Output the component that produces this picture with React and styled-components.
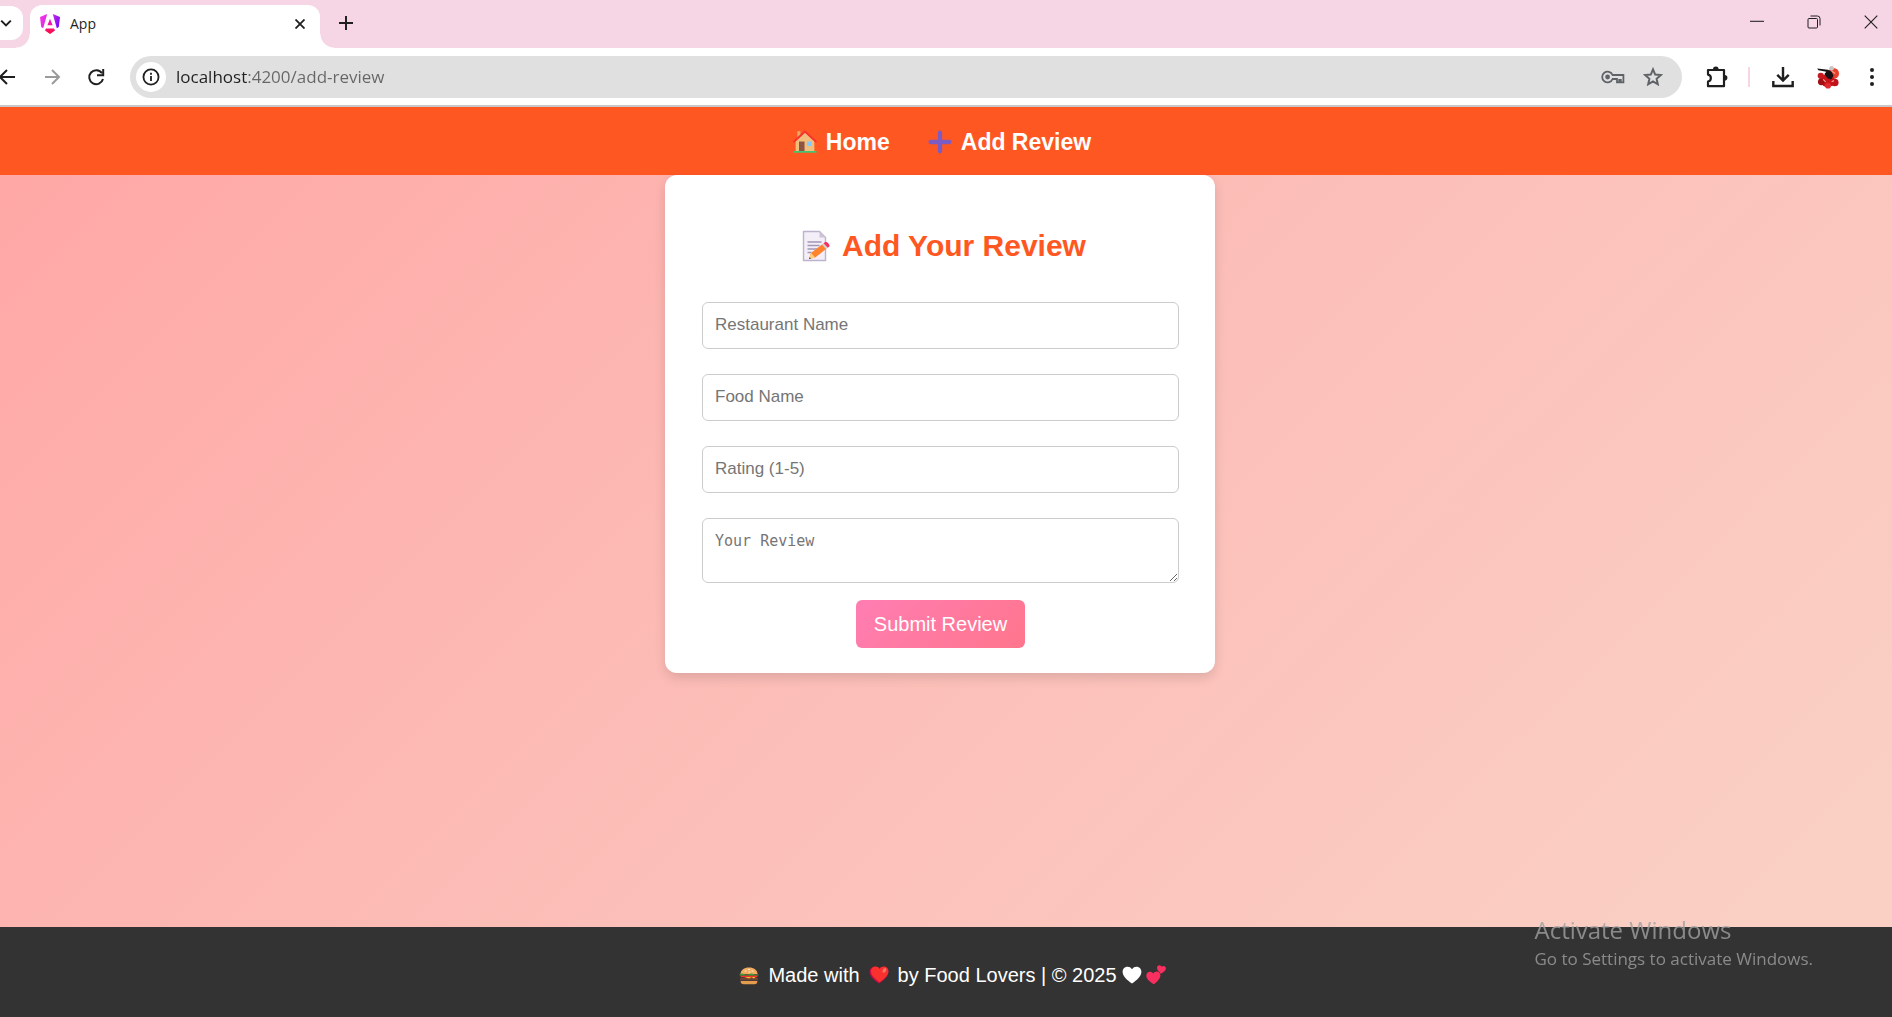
import React from "react";
import styled, { createGlobalStyle } from "styled-components";

const GlobalStyle = createGlobalStyle`
  * { box-sizing: border-box; }
  body { margin: 0; font-family: "Liberation Sans", Arial, sans-serif; }
  button, input, textarea { font: inherit; margin: 0; }
`;

const uiFont = `"Open Sans", "Noto Sans", sans-serif`;

const Window = styled.div`
  display: flex;
  flex-direction: column;
  min-height: 100vh;
`;

const IconButton = styled.button`
  display: flex;
  align-items: center;
  justify-content: center;
  flex: none;
  width: ${(p) => p.$w || 24}px;
  height: 32px;
  padding: 0;
  border: 0;
  background: none;
  color: ${(p) => p.$color || "#1f1f1f"};
`;

const TitleBar = styled.header`
  display: flex;
  align-items: flex-start;
  height: 48px;
  padding-right: 9px;
  background: #f6d5e4;
`;

const TabSearch = styled(IconButton)`
  width: 23px;
  height: 34px;
  margin-top: 6px;
  padding-right: 11px;
  border-radius: 0 12px 12px 0;
  background: #fff;
`;

const Tab = styled.div`
  position: relative;
  display: flex;
  align-items: center;
  gap: 10px;
  width: 290px;
  height: 43px;
  margin: 5px 12px 0 7px;
  padding: 0 8px 6px 10px;
  border-radius: 12px 12px 0 0;
  background: #fff;
  font: 14px/20px ${uiFont};
  color: #1f1f1f;

  &::before,
  &::after {
    content: "";
    position: absolute;
    bottom: 0;
    width: 14px;
    height: 14px;
  }
  &::before {
    right: 100%;
    background: radial-gradient(circle at 0 0, transparent 13px, #fff 14px);
  }
  &::after {
    left: 100%;
    background: radial-gradient(circle at 100% 0, transparent 13px, #fff 14px);
  }
`;

const TabTitle = styled.span`
  flex: 1;
`;

const NewTab = styled(IconButton)`
  margin-top: 7px;
`;

const WindowControls = styled.div`
  display: flex;
  gap: 33px;
  margin-top: 6px;
  margin-left: auto;
`;

const Toolbar = styled.div`
  display: flex;
  align-items: center;
  height: 59px;
  border-bottom: 2px solid #c8c8c8;
  padding-right: 8px;
  background: #fff;
`;

const NavButtons = styled.div`
  display: flex;
  gap: 20px;
  margin-right: 22px;
`;

const AddressBar = styled.div`
  display: flex;
  flex: 1;
  align-items: center;
  height: 42px;
  padding: 0 17px 0 6px;
  border-radius: 21px;
  background: #e0e0e0;
`;

const SiteInfo = styled(IconButton)`
  width: 30px;
  height: 30px;
  border-radius: 50%;
  background: #fff;
`;

const Address = styled.input`
  flex: 1;
  min-width: 0;
  padding: 0;
  margin-left: 10px;
  border: 0;
  outline: 0;
  font: 17px/24px ${uiFont};
  color: #5f6368;
  background: linear-gradient(90deg, #1f1f1f 71px, #666 71px);
  background-clip: text;
  -webkit-background-clip: text;
  -webkit-text-fill-color: transparent;
`;

const AddressActions = styled.div`
  display: flex;
  gap: 16px;
`;

const ToolbarActions = styled.div`
  display: flex;
  align-items: center;
  margin-left: 22px;
`;

const Separator = styled.span`
  width: 2px;
  height: 20px;
  margin: 0 21px 0 20px;
  background: #f6d5e4;
`;

const Profile = styled(IconButton)`
  margin: 0 20px 0 21px;
`;

const SiteNav = styled.nav`
  display: flex;
  justify-content: center;
  gap: 38px;
  padding: 20px 8px 18px 0;
  background: #ff5722;
`;

const NavLink = styled.a`
  display: flex;
  align-items: center;
  gap: 9px;
  font-size: 23px;
  line-height: 30px;
  font-weight: bold;
  color: #fff;
  text-decoration: none;
`;

const Page = styled.main`
  flex: 1;
  padding: 0 12px 24px 0;
  background: linear-gradient(135deg, #ffa8a6, #fcbeb8 50%, #fad0c4 96%);
`;

const Card = styled.section`
  width: 100%;
  max-width: 550px;
  margin: 0 auto;
  padding: 51px 36px 25px 37px;
  border-radius: 12px;
  background: #fff;
  box-shadow: 0 5px 12px rgba(0, 0, 0, 0.12);
`;

const CardTitle = styled.h2`
  display: flex;
  align-items: center;
  justify-content: center;
  gap: 11px;
  margin: 0 0 36px;
  padding-left: 6px;
  font-size: 30px;
  line-height: 40px;
  color: #ff5722;
`;

const Form = styled.form`
  display: flex;
  flex-direction: column;
  align-items: center;
`;

const fieldStyle = `
  display: block;
  width: 100%;
  padding: 12px;
  border: 1px solid #ccc;
  border-radius: 6px;
  background: #fff;
  color: #222;
  outline: 0;
  &::placeholder { color: #757575; opacity: 1; }
`;

const Field = styled.input`
  ${fieldStyle}
  height: 47px;
  margin-bottom: 25px;
  padding-bottom: 14px;
  font-size: 17px;
`;

const ReviewField = styled.textarea`
  ${fieldStyle}
  height: 65px;
  margin-bottom: 17px;
  font: 15px/20px "DejaVu Sans Mono", monospace;
  resize: vertical;
`;

const Submit = styled.button`
  padding: 12px 18px;
  border: 0;
  border-radius: 6px;
  background: linear-gradient(135deg, #ff7eb3, #ff758c);
  font-size: 20px;
  line-height: 24px;
  color: #fff;
`;

const Footer = styled.footer`
  display: flex;
  align-items: center;
  justify-content: center;
  height: 90px;
  padding: 5px 0 0 13px;
  background: #333;
  color: #fff;
  font-size: 20px;
  line-height: 24px;
`;

const FooterText = styled.p`
  display: flex;
  align-items: center;
  gap: 9px;
  margin: 0;
`;

const Hearts = styled.span`
  display: flex;
  gap: 4px;
  margin-left: -4px;
`;

const Watermark = styled.aside`
  position: fixed;
  right: 79px;
  bottom: 45px;
  font-family: ${uiFont};
  color: rgba(160, 160, 160, 0.8);
  pointer-events: none;
`;

const WatermarkTitle = styled.p`
  margin: 0;
  font-size: 24px;
  line-height: 32px;
`;

const WatermarkText = styled.p`
  margin: 0;
  font-size: 17px;
  line-height: 26px;
`;

function Svg({ size = 20, children, ...rest }) {
  return (
    <svg width={size} height={size} viewBox="0 0 20 20" fill="none" aria-hidden="true" {...rest}>
      {children}
    </svg>
  );
}

const line = { stroke: "currentColor", strokeWidth: 2 };

const Chevron = () => (
  <Svg size={12}><path d="M2 6l8 8 8-8" stroke="currentColor" strokeWidth="3.4" /></Svg>
);
const Angular = () => (
  <Svg>
    <defs>
      <linearGradient id="ng-a" x1="0" y1="0" x2="20" y2="8" gradientUnits="userSpaceOnUse">
        <stop stopColor="#f637e3" /><stop offset=".5" stopColor="#d829e8" /><stop offset="1" stopColor="#7a0df5" />
      </linearGradient>
      <linearGradient id="ng-b" x1="0" y1="6" x2="0" y2="20" gradientUnits="userSpaceOnUse">
        <stop stopColor="#e91ecb" /><stop offset="1" stopColor="#ff0a3c" />
      </linearGradient>
    </defs>
    <path d="M0 3L7.2 0 3.2 14.2 1.2 13z M20 3L12.8 0l4 14.2 2-1.2z" fill="url(#ng-a)" />
    <path d="M10 4.8l2.6 6.4H7.4z M6 14.6h8l1 1.8L10 20l-5-3.6z" fill="url(#ng-b)" />
  </Svg>
);
const Cross = () => (
  <Svg size={10}><path d="M1 1l18 18M19 1L1 19" stroke="currentColor" strokeWidth="3.6" /></Svg>
);
const Plus = () => (
  <Svg size={14}><path d="M10 0v20M0 10h20" stroke="currentColor" strokeWidth="2.8" /></Svg>
);
const Minimize = () => (
  <Svg size={14}><path d="M0 9h20" stroke="currentColor" strokeWidth="1.5" /></Svg>
);
const Restore = () => (
  <svg width="14" height="14" viewBox="0 0 14 14" fill="none" stroke="currentColor" aria-hidden="true">
    <rect x="1" y="3.5" width="9.5" height="9.5" rx="1" />
    <path d="M3.5 1h7A2.6 2.6 0 0 1 13 3.5v7" />
  </svg>
);
const CloseWindow = () => (
  <Svg size={14}><path d="M1 1l18 18M19 1L1 19" stroke="currentColor" strokeWidth="1.6" /></Svg>
);
const Back = () => (
  <Svg><path d="M15 10H0M7 3l-7 7 7 7" {...line} /></Svg>
);
const Forward = () => (
  <Svg><path d="M3 10h14M10 3l7 7-7 7" {...line} /></Svg>
);
const Reload = () => (
  <Svg>
    <path d="M16 6.2A7 7 0 1 0 17 12" {...line} />
    <path d="M17.2 2v6.2H11" {...line} />
  </Svg>
);
const Info = () => (
  <Svg size={18}>
    <circle cx="10" cy="10" r="8.4" {...line} />
    <path d="M10 9v5.5M10 5.2v2.2" {...line} />
  </Svg>
);
const Key = () => (
  <svg width="24" height="14" viewBox="0 0 24 14" fill="none" aria-hidden="true">
    <path d="M11.6 5A5.4 5.4 0 1 0 11.6 9H16v3.4h2.2V9.8h1.6v2.6H22.4V5z" stroke="currentColor" strokeWidth="1.8" />
    <circle cx="6.6" cy="7" r="2.4" fill="currentColor" />
  </svg>
);
const Star = () => (
  <Svg size={20}>
    <path d="M10 2.4l2.2 5.2 5.6.5-4.2 3.7 1.2 5.5-4.8-2.9-4.8 2.9 1.2-5.5L2.2 8.1l5.6-.5z" stroke="currentColor" strokeWidth="2" />
  </Svg>
);
const Puzzle = () => (
  <svg width="24" height="24" viewBox="0 0 24 24" fill="none" aria-hidden="true">
    <path d="M4 5h16v16.2H4v-4.6c3.8-.6 3.8-6.4 0-7z" stroke="currentColor" strokeWidth="2.2" strokeLinejoin="round" />
    <path d="M9 4.4a2.8 2.8 0 0 1 5.6 0z M20.6 10a2.8 2.8 0 0 1 0 5.6z" fill="currentColor" />
  </svg>
);
const Download = () => (
  <Svg size={22}>
    <path d="M10 1v12M4.8 8l5.2 5.2L15.2 8M1.2 13.6v4.6h17.6v-4.6" stroke="currentColor" strokeWidth="2.2" />
  </Svg>
);
const Avatar = () => (
  <Svg size={24}>
    <circle cx="4" cy="9" r="2.6" fill="#c71a20" />
    <circle cx="14.6" cy="7" r="4.6" fill="#e8402c" />
    <circle cx="9.6" cy="13" r="5.6" fill="#c8141a" />
    <circle cx="4.4" cy="14" r="2.8" fill="#a30d14" />
    <circle cx="15.6" cy="14.6" r="3.2" fill="#c1121b" />
    <circle cx="10" cy="17.2" r="2.4" fill="#e02a2e" />
    <circle cx="13" cy="2.8" r="2" fill="#c9c4c6" />
    <path d="M1 3l9 1 3 1.6 1.6 3.4-2 3-3-1-2.6-3.4 1.6-2L2 4.4z" fill="#171314" />
    <path d="M13 5l3 2M6 12l2 2M13 14l2-1" stroke="#f6a08c" />
  </Svg>
);
const Dots = () => (
  <Svg>
    <circle cx="10" cy="3" r="2" fill="currentColor" />
    <circle cx="10" cy="10" r="2" fill="currentColor" />
    <circle cx="10" cy="17" r="2" fill="currentColor" />
  </Svg>
);
const House = () => (
  <Svg size={24}>
    <path d="M3.6 1h2.6v6H3.6z" fill="#e9a965" />
    <path d="M2.2 9L10 1.8 17.8 9v9.2H2.2z" fill="#f3bd7b" />
    <path d="M1 9.6L10 1.2l9 8.4" stroke="#f8312f" strokeWidth="1.6" strokeLinecap="round" />
    <path d="M5 9.6h4.6v8.6H5z" fill="#8c5543" />
    <path d="M11.6 9.6h3.8v3.8h-3.8z" fill="#83cbff" />
    <path d="M1 18.3h18" stroke="#44c472" strokeWidth="1.5" strokeLinecap="round" />
  </Svg>
);
const PurplePlus = () => (
  <Svg size={24}><path d="M10 2.2v15.6M2.2 10h15.6" stroke="#7d5bc4" strokeWidth="3.6" strokeLinecap="round" /></Svg>
);
const Memo = () => (
  <svg width="30" height="32" viewBox="0 0 30 32" fill="none" aria-hidden="true">
    <path d="M2.5 1.5h16l6 6v23h-22z" fill="#f3eef8" stroke="#bdb3cd" strokeLinejoin="round" strokeWidth="1.4" />
    <path d="M18.5 1.5l6 6h-6z" fill="#cdc4d6" />
    <path d="M6.5 12h14M6.5 15.5h12M6.5 19h10M6.5 22.5h4" stroke="#a397b5" strokeWidth="1.3" />
    <path d="M8 29l2-6L21.6 14l4 4.6L14.2 27.6z" fill="#ff822d" />
    <path d="M8 29l2-6 4.2 4.6z" fill="#ffce7c" />
    <path d="M8 29l.6-1.8 1.4 1.2z" fill="#402a32" />
    <path d="M21 14.4l1.8-1.4 4 4.6-1.8 1.4z" fill="#d3d3d3" />
    <path d="M22.6 13.2c2-2 3.6-1.2 5 .5s1.4 2.6-.8 4z" fill="#f92f60" />
  </svg>
);
const Burger = () => (
  <Svg>
    <path d="M1.4 9.2C1.8 4.6 5 2.4 10 2.4s8.2 2.2 8.6 6.8z" fill="#f3ad61" />
    <rect x=".8" y="12.6" width="18.4" height="3" rx="1.5" fill="#6d4534" />
    <path d="M2 11h16l-3 2.6-2.6-1.4L10 13.6z" fill="#ffb02e" />
    <path d="M1.6 10.4h16.8v1.6H1.6z" fill="#f8312f" />
    <path d="M.6 9.2q2.3-1.6 4.7 0t4.7 0 4.7 0 4.7 0v1.4H.6z" fill="#3f9a35" />
    <path d="M1.6 16h16.8q0 3.2-3 3.2H4.6q-3 0-3-3.2z" fill="#e39d4d" />
    <path d="M6 6h1M9.5 4.5h1M13 6h1M10 7h1" stroke="#fff0cf" strokeLinecap="round" />
  </Svg>
);
const heartPath = "M10 18.6C5 15 .6 11.2.6 6.8.6 1.4 7.4-.2 10 4.2 12.6-.2 19.4 1.4 19.4 6.8c0 4.4-4.4 8.2-9.4 11.8z";
const RedHeart = () => (
  <Svg>
    <path d={heartPath} fill="#ca0b4a" />
    <path d={heartPath} fill="#f8312f" transform="translate(1.4 0) scale(.93)" />
    <ellipse cx="15.4" cy="5.4" rx="1.6" ry="2.6" fill="#f37366" transform="rotate(30 15.4 5.4)" />
  </Svg>
);
const WhiteHeart = () => (
  <Svg><path d={heartPath} fill="#fff" /></Svg>
);
const TwoHearts = () => (
  <Svg>
    <path d={heartPath} fill="#f92f60" transform="translate(0 5.4) rotate(-4 7 7) scale(.75)" />
    <path d={heartPath} fill="#f92f60" transform="translate(10.4 -.2) rotate(8 5 5) scale(.48)" />
  </Svg>
);

const fields = [
  { name: "restaurant", label: "Restaurant Name", type: "text" },
  { name: "food", label: "Food Name", type: "text" },
  { name: "rating", label: "Rating (1-5)", type: "number" },
];

export default function App() {
  return (
    <Window>
      <GlobalStyle />
      <TitleBar>
        <TabSearch aria-label="Search tabs"><Chevron /></TabSearch>
        <Tab>
          <Angular />
          <TabTitle>App</TabTitle>
          <IconButton aria-label="Close tab"><Cross /></IconButton>
        </Tab>
        <NewTab $w={28} aria-label="New tab"><Plus /></NewTab>
        <WindowControls>
          <IconButton aria-label="Minimize"><Minimize /></IconButton>
          <IconButton aria-label="Restore"><Restore /></IconButton>
          <IconButton aria-label="Close"><CloseWindow /></IconButton>
        </WindowControls>
      </TitleBar>
      <Toolbar>
        <NavButtons>
          <IconButton $w={20} aria-label="Back"><Back /></IconButton>
          <IconButton aria-label="Forward" $color="#9a9a9a"><Forward /></IconButton>
          <IconButton aria-label="Reload"><Reload /></IconButton>
        </NavButtons>
        <AddressBar>
          <SiteInfo aria-label="Site information"><Info /></SiteInfo>
          <Address aria-label="Address" defaultValue="localhost:4200/add-review" />
          <AddressActions>
            <IconButton aria-label="Passwords" $color="#5f6368"><Key /></IconButton>
            <IconButton aria-label="Bookmark" $color="#5f6368"><Star /></IconButton>
          </AddressActions>
        </AddressBar>
        <ToolbarActions>
          <IconButton aria-label="Extensions"><Puzzle /></IconButton>
          <Separator />
          <IconButton aria-label="Downloads"><Download /></IconButton>
          <Profile aria-label="Profile"><Avatar /></Profile>
          <IconButton aria-label="Menu"><Dots /></IconButton>
        </ToolbarActions>
      </Toolbar>
      <SiteNav>
        <NavLink href="#home"><House />Home</NavLink>
        <NavLink href="#add-review"><PurplePlus />Add Review</NavLink>
      </SiteNav>
      <Page>
        <Card>
          <CardTitle><Memo />Add Your Review</CardTitle>
          <Form onSubmit={(e) => e.preventDefault()}>
            {fields.map((f) => (
              <Field key={f.name} name={f.name} type={f.type} placeholder={f.label} aria-label={f.label} />
            ))}
            <ReviewField name="review" placeholder="Your Review" aria-label="Your Review" />
            <Submit type="submit">Submit Review</Submit>
          </Form>
        </Card>
      </Page>
      <Footer>
        <FooterText>
          <Burger />
          <span>Made with</span>
          <RedHeart />
          <span>by Food Lovers | © 2025</span>
          <Hearts><WhiteHeart /><TwoHearts /></Hearts>
        </FooterText>
      </Footer>
      <Watermark>
        <WatermarkTitle>Activate Windows</WatermarkTitle>
        <WatermarkText>Go to Settings to activate Windows.</WatermarkText>
      </Watermark>
    </Window>
  );
}
